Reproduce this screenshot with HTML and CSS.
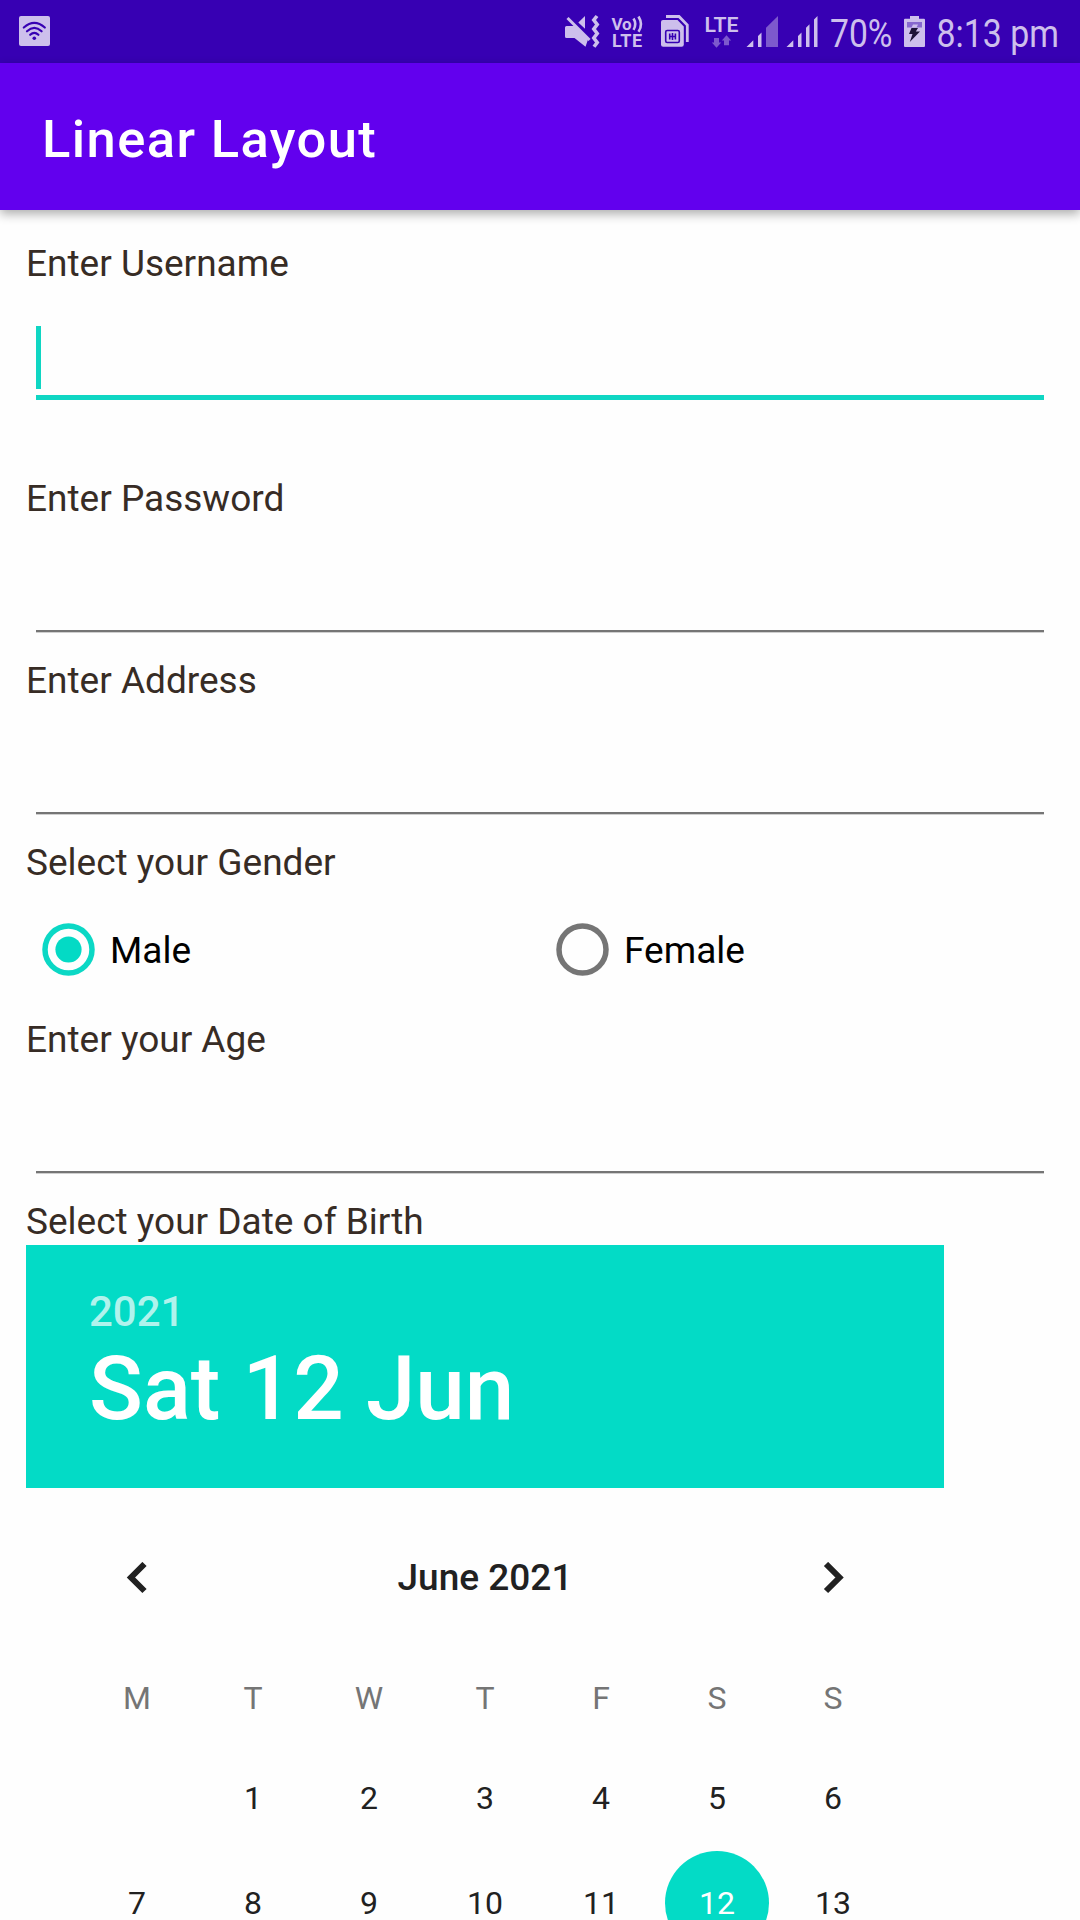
FILE: index.html
```html
<!DOCTYPE html>
<html lang="en">
<head>
<meta charset="utf-8">
<title>Linear Layout</title>
<link rel="stylesheet" href="styles.css">
</head>
<body>
<div class="screen">
  <div class="status-bar">
    <svg class="wifi" width="31" height="30" viewBox="19 16 31 30">
      <rect class="fg" x="19" y="16" width="31" height="30" rx="2"/>
      <g class="wifi-arcs">
        <path d="M23.8 27.5Q34.3 18.3 44.8 27.5"/>
        <path d="M27 31.3Q34.3 24.6 41.6 31.3"/>
        <path d="M30.2 34.8Q34.3 31 38.4 34.8"/>
      </g>
      <circle class="bg" cx="34.3" cy="38.2" r="1.8"/>
    </svg>
    <div class="status-icons">
      <svg width="45" height="63" viewBox="561 0 45 63">
        <path class="fg" d="M565 27.5Q565 26 566.500 26H575L588 39.500L585.500 46.800L574.500 38H566.500Q565 38 565 36.500ZM578.300 22.500L585 16V28.800Z"/>
        <path class="line" stroke-width="3" d="M567.500 18L589.500 40"/>
        <path class="line" stroke-width="3.600" d="M597 16L593.800 20L597.200 24.500L593.800 29L597.200 33.500L593.800 38L597.200 42.500L594 46.800"/>
      </svg>
      <svg width="46" height="63" viewBox="606 0 46 63">
        <text class="tag" x="611.500" y="29.500" font-size="17" textLength="20">Vo</text>
        <path class="line" stroke-width="2.600" d="M633.500 18.500Q637 24 633.500 29.800M638.500 16.500Q643.500 24.500 638.500 31.800"/>
        <text class="tag" x="612" y="46.800" font-size="18" textLength="30">LTE</text>
      </svg>
      <svg width="46" height="63" viewBox="652 0 46 63">
        <path class="line" stroke-width="2.800" d="M666 16.500H679L687.300 25V42"/>
        <path class="fg" d="M663 20H677.500L683.800 26.500V44.500Q683.800 46.700 681.600 46.700H663.200Q661 46.700 661 44.500V22Q661 20 663 20Z"/>
        <rect class="chip" x="665.700" y="30.500" width="13.600" height="12" rx="1.500"/>
        <path class="chip" d="M669.700 33.500V39.500M672.500 33V40M675.400 33.500V39.500M669.700 36.500H675.400"/>
      </svg>
      <svg width="44" height="63" viewBox="698 0 44 63">
        <text class="tag tag-medium" x="704.500" y="31.600" font-size="19.500" textLength="34" lengthAdjust="spacingAndGlyphs">LTE</text>
        <path class="dim" d="M714 38H719V42.500H721.200L716.500 47.700L711.800 42.500H714ZM724 45.300H729V40.500H731.200L726.500 35.300L721.800 40.500H724Z"/>
      </svg>
      <svg width="41" height="63" viewBox="742 0 41 63">
        <path class="fg" d="M746.500 47L753.300 40.300V47ZM758 36L761.500 32.500V47H758Z"/>
        <path class="dim" d="M766 27.700L778 16V47H766Z"/>
      </svg>
      <svg width="41" height="63" viewBox="783 0 41 63">
        <path class="fg" d="M786.500 47L793.300 40.300V47ZM798 36L801.500 32.500V47H798ZM806 27.800L809.500 24.300V47H806ZM814 19.500L817.500 16V47H814Z"/>
      </svg>
      <svg width="76" height="63" viewBox="824 0 76 63">
        <text class="readout" x="830" y="46.700" textLength="62.500" lengthAdjust="spacingAndGlyphs">70%</text>
      </svg>
      <svg width="32" height="63" viewBox="900 0 32 63">
        <path class="fg" d="M910 16H919V18.700H924Q925 18.700 925 20V46Q925 47 924 47H905Q904 47 904 46V20Q904 18.700 905 18.700H910Z"/>
        <rect class="battery-gap" x="907" y="22" width="15" height="5.500"/>
        <path class="fg" d="M911.500 27.500L913 24.500H918L916.500 27.500Z"/>
        <path class="bolt" d="M911.500 28H918L915.800 31.500H920L909.800 42L912.500 34H909Z"/>
      </svg>
      <svg width="148" height="63" viewBox="932 0 148 63">
        <text class="readout" x="936.500" y="46.700" textLength="122.500" lengthAdjust="spacingAndGlyphs">8:13 pm</text>
      </svg>
    </div>
  </div>

  <header class="app-bar"><h1 class="app-title">Linear Layout</h1></header>

  <main class="form">
    <label class="label">Enter Username</label>
    <div class="field field-focused"><span class="caret"></span></div>
    <label class="label">Enter Password</label>
    <div class="field"></div>
    <label class="label">Enter Address</label>
    <div class="field"></div>
    <label class="label">Select your Gender</label>
    <div class="radios">
      <div class="radio">
        <svg class="ring ring-on" width="53" height="53" viewBox="0 0 53 53"><circle class="ring-edge" cx="26.500" cy="26.500" r="23.500"/><circle class="ring-dot" cx="26.500" cy="26.500" r="13.100"/></svg>
        <span class="radio-text">Male</span>
      </div>
      <div class="radio">
        <svg class="ring" width="53" height="53" viewBox="0 0 53 53"><circle class="ring-edge" cx="26.500" cy="26.500" r="23.500"/></svg>
        <span class="radio-text">Female</span>
      </div>
    </div>
    <label class="label">Enter your Age</label>
    <div class="field"></div>
    <label class="label">Select your Date of Birth</label>

    <section class="picker">
      <div class="picker-head">
        <div class="year">2021</div>
        <div class="date">Sat 12 Jun</div>
      </div>
      <div class="month">
        <svg class="chevron" width="32" height="32" viewBox="0 0 32 32"><path d="M23.500 2L10 15.500L23.500 29"/></svg>
        <div class="month-name">June 2021</div>
        <svg class="chevron" width="32" height="32" viewBox="0 0 32 32"><path d="M9 2L22.500 15.500L9 29"/></svg>
      </div>
      <div class="grid weekdays"><span>M</span><span>T</span><span>W</span><span>T</span><span>F</span><span>S</span><span>S</span></div>
      <div class="grid days">
        <span></span><span>1</span><span>2</span><span>3</span><span>4</span><span>5</span><span>6</span>
        <span>7</span><span>8</span><span>9</span><span>10</span><span>11</span><span class="selected">12</span><span>13</span>
      </div>
    </section>
  </main>
</div>
</body>
</html>
```
FILE: styles.css
```css
* { box-sizing: border-box; }
body { margin: 0; background: #fefefe; font-family: Roboto, sans-serif; }
.screen { width: 1080px; height: 1920px; overflow: hidden; display: flex; flex-direction: column; }

.status-bar { flex: none; height: 63px; background: #3700b3; display: flex; justify-content: space-between; }
.status-bar svg { display: block; flex: none; }
.wifi { margin: 16px 0 0 19px; }
.status-icons { display: flex; }
.fg { fill: #cdbfec; }
.bg { fill: #3700b3; }
.dim { fill: #7d59cd; }
.line { fill: none; stroke: #cdbfec; }
.wifi-arcs { fill: none; stroke: #3700b3; stroke-width: 2.2; stroke-linecap: round; }
.chip { fill: none; stroke: #3700b3; stroke-width: 1.6; }
.tag { fill: #cdbfec; font-weight: 700; }
.tag-medium { font-weight: 600; }
.readout { fill: #cdbfec; font-size: 38.5px; }
.battery-gap { fill: #8768cf; }
.bolt { fill: #1d1238; }

.app-bar { flex: none; position: relative; height: 147px; padding-left: 42px; background: #6200ee; display: flex; align-items: center; box-shadow: 0 4px 10px rgba(0, 0, 0, .32); }
.app-title { margin: 4px 0 0; color: #fff; font-size: 52.5px; font-weight: 500; line-height: 62px; letter-spacing: 1.4px; }

.form { padding: 28px 26px 0; display: flex; flex-direction: column; }
.label { flex: none; height: 49px; padding-top: 1px; font-size: 37px; line-height: 49px; color: #372c25; }
.field { flex: none; height: 133px; margin: 0 10px; padding-bottom: 23px; display: flex; flex-direction: column; justify-content: flex-end; }
.field::after { content: ""; height: 2px; background: #757575; box-shadow: 0 1px 0 #cfcfcf; }
.field-focused { height: 186px; padding-bottom: 73px; }
.field-focused::after { height: 5px; background: #0fd6c3; box-shadow: none; }
.caret { width: 5px; height: 63px; margin-bottom: 6px; background: #0fd6c3; }

.radios { flex: none; height: 128px; padding-bottom: 2px; display: flex; }
.radio { flex: 1; display: flex; align-items: center; padding-left: 15.5px; gap: 15.5px; font-size: 37px; line-height: 49px; color: #000; }
.radio-text { padding-top: 2px; }
.ring { flex: none; }
.ring-edge { fill: none; stroke: #757575; stroke-width: 5.5; }
.ring-on .ring-edge { stroke: #0bd8c5; }
.ring-dot { fill: #03dac5; }

.picker { flex: none; width: 918px; }
.picker-head { height: 243px; padding: 42px 63px 0; background: #03dbc6; color: #fff; font-weight: 500; }
.year { font-size: 42px; line-height: 49px; color: rgba(255, 255, 255, .7); }
.date { padding-top: 1px; font-size: 89px; line-height: 104px; }
.month { height: 147px; margin: 16px 53px 0; padding: 0 42px; display: flex; align-items: center; justify-content: space-between; color: #212121; }
.month-name { font-size: 37px; line-height: 43px; font-weight: 500; }
.chevron { fill: none; stroke: #212121; stroke-width: 6; }
.grid { margin: 0 53px; display: grid; grid-template-columns: repeat(7, 1fr); justify-items: center; align-items: center; font-size: 32px; }
.weekdays { height: 94px; color: #757575; }
.days { grid-auto-rows: 105px; color: #212121; }
.days span { padding-top: 1px; }
.selected { width: 104px; height: 104px; border-radius: 50%; background: #03dbc6; color: #fff; display: grid; place-items: center; }
```
